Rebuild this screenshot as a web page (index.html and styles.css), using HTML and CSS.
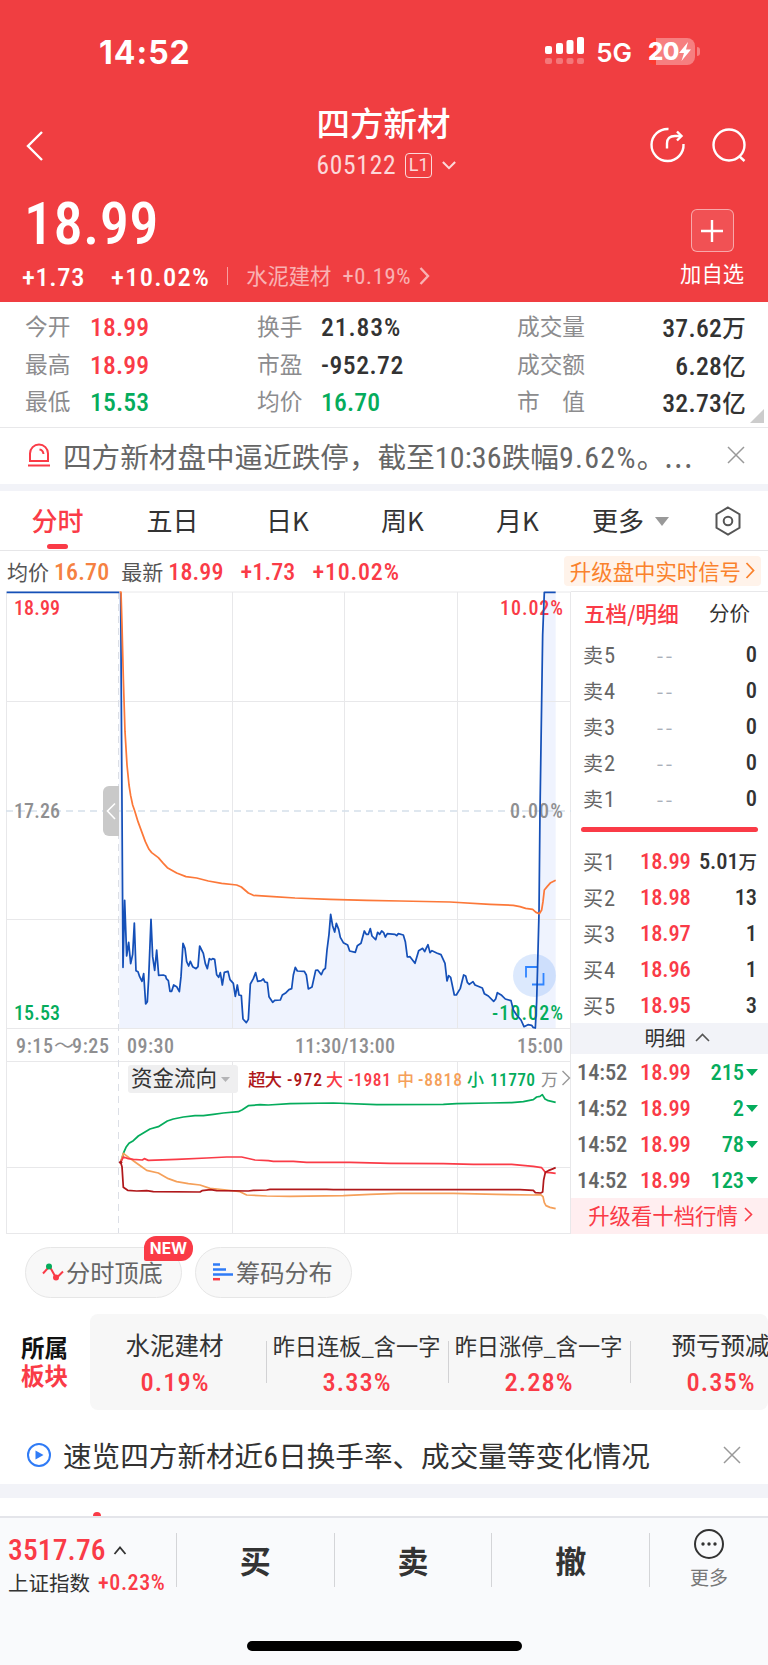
FILE: index.html
```html
<!DOCTYPE html>
<html lang="zh-CN">
<head>
  <meta charset="utf-8">
  <title>四方新材 605122</title>
  <link rel="stylesheet" href="styles.css">
</head>
<body>
<div class="page">
  <!-- Header -->
  <header class="header">
    <div class="statusbar">
      <span class="clock">14:52</span>
      <div class="status-right">
        <svg class="signal" width="40" height="28" viewBox="0 0 40 28" fill="#fff">
          <rect x="0" y="9" width="7" height="8" rx="2"/><rect x="11" y="6" width="7" height="11" rx="2"/>
          <rect x="21.5" y="3" width="7" height="14" rx="2"/><rect x="32" y="0" width="7" height="17" rx="2"/>
          <g opacity=".3"><rect x="0" y="21" width="7" height="6" rx="2"/><rect x="11" y="21" width="7" height="6" rx="2"/><rect x="21.5" y="21" width="7" height="6" rx="2"/><rect x="32" y="21" width="7" height="6" rx="2"/></g>
        </svg>
        <span class="net">5G</span>
        <span class="battery"><b>20</b><svg width="12" height="19" viewBox="0 0 12 19" fill="#fff"><path d="M9 0L0 11h5L2.500 19L12 7.500H7z"/></svg></span><i class="nub"></i>
      </div>
    </div>
    <div class="titlebar">
      <svg class="back" width="18" height="32" viewBox="0 0 18 32"><path d="M16 2L2 16L16 30"/></svg>
      <div class="title">
        <h1>四方新材</h1>
        <div class="code"><span class="num">605122</span><span class="level">L1</span><svg width="14" height="9" viewBox="0 0 16 10"><path d="M1 1l7 7l7-7"/></svg></div>
      </div>
      <div class="actions">
        <svg width="36" height="36" viewBox="0 0 36 36"><path d="M18.500 2A16 16 0 1 0 33.500 17"/><path d="M17 21.500v-5Q17 9 25 9H31"/><path d="M27 4.500L31.500 9L27 13.500"/></svg>
        <svg width="36" height="36" viewBox="0 0 36 36"><circle cx="18" cy="18" r="15.500"/><path d="M28 29l5.500 5"/></svg>
      </div>
    </div>
    <div class="quote">
      <div>
        <div class="price num">18.99</div>
        <div class="change"><span class="num c1">+1.73</span><span class="num c2">+10.02%</span><i></i><span class="ind">水泥建材</span><span class="num c3">+0.19%</span><svg width="11" height="18" viewBox="0 0 11 18"><path d="M1.500 1L9 9L1.500 17"/></svg></div>
      </div>
      <div class="add">
        <span class="plus"><svg width="22" height="22" viewBox="0 0 22 22"><path d="M11 0v22M0 11h22"/></svg></span>
        <span>加自选</span>
      </div>
    </div>
  </header>

  <!-- Key figures -->
  <section class="stats">
    <span class="k">今开</span><span class="v num up">18.99</span><span class="k">换手</span><span class="v num pct">21.83%</span><span class="k">成交量</span><span class="v num r">37.62<em>万</em></span>
    <span class="k">最高</span><span class="v num up">18.99</span><span class="k">市盈</span><span class="v num pe">-952.72</span><span class="k">成交额</span><span class="v num r">6.28<em>亿</em></span>
    <span class="k">最低</span><span class="v num down">15.53</span><span class="k">均价</span><span class="v num down">16.70</span><span class="k wide"><b>市</b><b>值</b></span><span class="v num r">32.73<em>亿</em></span>
    <span class="corner"></span>
  </section>

  <div class="notice">
    <svg class="alarm" width="24" height="24" viewBox="0 0 24 24"><path d="M3 18V10.500a9 9 0 0 1 18 0V18zM1 22.500h22M12.500 6.500q3.500.5 4 4.500"/></svg>
    <p>四方新材盘中逼近跌停，截至<span class="num">10:36</span>跌幅<span class="num pct">9.62%</span>。<span class="dots">...</span></p>
    <svg class="close" width="18" height="18" viewBox="0 0 18 18"><path d="M1 1l16 16M17 1L1 17"/></svg>
  </div>

  <nav class="tabs">
    <span class="on">分时</span><span>五日</span><span>日K</span><span>周K</span><span>月K</span><span class="more">更多<i></i></span>
    <svg width="28" height="30" viewBox="0 0 28 30"><path d="M14 1.500L25.500 8.200V21.800L14 28.500L2.500 21.800V8.200z"/><circle cx="14" cy="15" r="4.300"/></svg>
  </nav>

  <div class="latest">
    <span>均价</span><span class="num avg">16.70</span><span class="lb">最新</span><span class="num up">18.99</span><span class="num up d1">+1.73</span><span class="num up d2">+10.02%</span>
    <span class="signal-link">升级盘中实时信号<svg width="10" height="17" viewBox="0 0 10 17"><path d="M1.500 1L8.500 8.500L1.500 16"/></svg></span>
  </div>

  <!-- Chart and order book -->
  <main class="board">
    <svg class="chart" width="571" height="643" viewBox="0 0 571 643">
      <!-- price area, drawn in thirds of a pixel -->
      <g transform="translate(0 -6) scale(.33333)">
        <path class="area" d="M358 1330V21L362 21 369 1147 374 946 380 1113 386 1072 392 1136 398 1108 403 1014 408 1157 414 1160 419 1175 426 1189 431 1166 437 1257 442 1250 446 1180 453 1003 458 1115 464 1156 470 1095 476 1171 490 1170 505 1187 510 1219 515 1219 521 1200 530 1205 538 1220 543 1175 549 1075 555 1090 560 1130 566 1143 571 1129 578 1145 588 1151 594 1145 599 1083 610 1105 616 1136 622 1151 628 1121 644 1123 650 1169 656 1177 661 1163 667 1200 673 1162 684 1159 690 1184 700 1195 706 1234 712 1200 717 1230 724 1232 729 1302 739 1313 745 1303 751 1197 760 1181 767 1163 773 1189 790 1182 802 1193 807 1235 818 1252 824 1246 841 1245 847 1230 875 1211 880 1170 886 1147 892 1158 913 1159 919 1170 925 1212 936 1206 947 1156 953 1155 964 1169 976 1150 981 1095 987 1048 992 988 998 1023 1004 1041 1009 1015 1021 1057 1030 1073 1043 1080 1049 1098 1066 1102 1072 1082 1083 1075 1093 1038 1105 1048 1111 1031 1116 1053 1127 1064 1133 1042 1145 1038 1156 1056 1162 1046 1195 1046 1210 1050 1216 1070 1222 1116 1230 1115 1245 1135 1256 1097 1268 1090 1284 1079 1290 1103 1323 1109 1335 1135 1341 1188 1346 1172 1352 1177 1363 1230 1381 1210 1391 1170 1402 1192 1419 1190 1447 1209 1481 1249 1492 1223 1516 1242 1533 1247 1550 1290 1572 1325 1606 1329 1610 1250 1617 985 1628 150 1633 22H1667V1330z"/>
      </g>
      <g class="grid">
        <path d="M6.500 1V642.500M232.500 1V437.500M232.500 471V642.500M344.500 1V437.500M344.500 471V642.500M457.500 1V437.500M457.500 471V642.500M570.500 1V642.500"/>
        <path d="M6 1H571M6 110.500H571M6 328.500H571M6 437.500H571M6 470.500H571M6 576.500H571M6 642.500H571"/>
        <path class="dash" d="M118.500 1V642"/>
        <path class="dash mid" d="M6 220H571"/>
      </g>
      <g class="labels">
        <text x="14" y="24" class="up" textLength="46">18.99</text>
        <text x="14" y="227" textLength="46">17.26</text>
        <text x="14" y="429" class="down" textLength="46">15.53</text>
        <text x="500" y="24" class="up" textLength="63">10.02%</text>
        <text x="510" y="227" textLength="53">0.00%</text>
        <text x="492" y="429" class="down" textLength="71">-10.02%</text>
        <text x="16" y="462" textLength="37">9:15</text><text x="54" y="462" font-size="16">～</text><text x="72" y="462" textLength="37">9:25</text>
        <text x="127" y="462" textLength="47">09:30</text>
        <text x="295" y="462" textLength="100">11:30/13:00</text>
        <text x="517" y="462" textLength="46">15:00</text>
      </g>
      <path class="handle" d="M119 195H109a6 6 0 0 0-6 6v38a6 6 0 0 0 6 6H119z"/>
      <path class="handle-arrow" d="M115 212.500l-7.500 7.500l7.500 8"/>
      <circle class="expand-bg" cx="534.500" cy="384.500" r="21.500"/>
      <path class="expand" d="M526 386.500V376H537M543.500 382V393.500H532"/>
      <g class="lines" transform="translate(0 -6) scale(.33333)">
        <path class="price-line" d="M20 22H358M362 24L369 1147 374 946 380 1113 386 1072 392 1136 398 1108 403 1014 408 1157 414 1160 419 1175 426 1189 431 1166 437 1257 442 1250 446 1180 453 1003 458 1115 464 1156 470 1095 476 1171 490 1170 497 1173 499 1181 505 1187 510 1219 515 1219 521 1200 530 1205 538 1220 543 1175 549 1075 555 1090 560 1130 566 1143 571 1129 578 1145 588 1151 594 1145 599 1083 610 1105 616 1136 622 1151 628 1121 634 1124 638 1121 644 1123 650 1169 656 1177 661 1163 667 1200 673 1162 684 1159 690 1184 700 1195 706 1234 712 1200 717 1230 724 1232 729 1302 739 1313 745 1303 751 1197 760 1181 767 1163 773 1189 784 1187 790 1182 795 1191 802 1193 807 1235 818 1252 824 1246 841 1245 847 1230 858 1223 867 1214 875 1211 880 1170 886 1147 892 1158 913 1159 919 1170 925 1212 936 1206 947 1156 953 1155 964 1169 970 1155 976 1150 981 1095 987 1048 992 988 998 1023 1004 1041 1009 1015 1016 1033 1021 1057 1030 1073 1043 1080 1049 1098 1066 1102 1072 1082 1083 1075 1093 1038 1099 1048 1105 1048 1111 1031 1116 1053 1127 1064 1133 1042 1139 1048 1145 1038 1151 1043 1156 1056 1162 1046 1185 1048 1190 1052 1195 1046 1210 1050 1216 1070 1222 1116 1230 1115 1245 1135 1256 1097 1268 1090 1274 1100 1284 1079 1290 1103 1296 1097 1310 1104 1323 1109 1335 1135 1341 1188 1346 1172 1352 1177 1363 1230 1369 1230 1381 1210 1391 1170 1397 1173 1402 1192 1408 1198 1419 1190 1425 1200 1447 1209 1453 1226 1465 1233 1481 1249 1487 1242 1492 1223 1505 1231 1516 1242 1533 1247 1540 1275 1550 1290 1563 1305 1572 1325 1584 1319 1595 1321 1599 1327 1606 1329 1610 1250 1617 985 1620 680 1628 150 1633 22H1667"/>
        <path class="avg-line" d="M359 21L363 21 366 120 370 280 375 440 381 540 387 600 392 632 398 660 404 677 414 710 425 740 436 770 447 793 455 803 475 818 490 835 502 848 530 864 558 875 590 879 625 888 665 895 710 900 724 906 745 924 760 931 820 935 885 939 990 943 1100 946 1200 948 1350 951 1470 958 1540 961 1560 965 1577 970 1598 973 1608 982 1618 986 1625 975 1629 950 1633 915 1642 904 1652 893 1667 886"/>
      </g>
      <g class="lines flow" transform="translate(0 439) scale(.33333)">
        <path stroke="#05ac5c" d="M362 397L371 368 378 352 387 340 400 332 415 318 430 309 450 297 475 290 502 273 520 267 550 261 585 257 610 257 640 253 670 249 715 245 727 239 745 227 780 224 805 225 870 221 1000 219 1130 224 1330 223 1370 221 1470 219 1535 218 1570 215 1600 209 1610 201 1620 199 1627 194 1635 207 1645 212 1667 217"/>
        <path stroke="#f5a05a" d="M362 397L370 370 390 385 405 396 425 410 440 421 475 429 505 446 530 455 565 461 600 465 630 475 680 480 720 485 740 495 800 498 870 499 1030 497 1110 493 1195 490 1360 490 1490 493 1600 495 1622 494 1629 500 1633 518 1638 527 1650 532 1667 536"/>
        <path stroke="#fa3b47" d="M362 397L370 381 385 386 400 388 427 390 433 386 445 391 530 388 620 384 680 381 725 381 765 390 805 392 820 394 880 394 920 397 1050 397 1170 400 1330 401 1420 403 1535 403 1600 409 1625 413 1636 427 1650 428 1667 430"/>
        <path stroke="#b0181b" d="M362 397L366 410 370 472 383 481 410 483 440 482 460 485 600 486 606 482 632 479 650 482 745 483 760 481 800 480 810 478 980 478 1000 479 1560 479 1600 481 1606 488 1622 489 1628 486 1631 450 1636 427 1645 422 1660 416 1667 413"/>
        <circle cx="362" cy="397" r="5" fill="#b0181b"/>
      </g>
      <rect x="128" y="474" width="110" height="28" rx="3" fill="#efeff0"/>
      <text x="131" y="495" class="flow-name" textLength="86">资金流向</text>
      <path d="M221 486h9l-4.500 5z" fill="#b4b4b6"/>
      <g class="legend">
        <text x="248" y="495" fill="#b0181b" textLength="34">超大</text><text x="287" y="495" fill="#b0181b" textLength="35">-972</text>
        <text x="326" y="495" fill="#fa3b47">大</text><text x="348" y="495" fill="#fa3b47" textLength="43">-1981</text>
        <text x="397" y="495" fill="#f5a05a">中</text><text x="418" y="495" fill="#f5a05a" textLength="44">-8818</text>
        <text x="467" y="495" fill="#05ac5c">小</text><text x="490" y="495" fill="#05ac5c" textLength="45">11770</text>
        <text x="541" y="495" fill="#8d8d8f" class="unit">万</text>
      </g>
      <path class="legend-arrow" d="M562.500 480l7 7l-7 7"/>
    </svg>

    <aside class="book">
      <div class="book-tabs"><b>五档/明细</b><span>分价</span></div>
      <ul class="levels">
        <li><span>卖<i class="num">5</i></span><span class="none">--</span><span class="num vol">0</span></li>
        <li><span>卖<i class="num">4</i></span><span class="none">--</span><span class="num vol">0</span></li>
        <li><span>卖<i class="num">3</i></span><span class="none">--</span><span class="num vol">0</span></li>
        <li><span>卖<i class="num">2</i></span><span class="none">--</span><span class="num vol">0</span></li>
        <li><span>卖<i class="num">1</i></span><span class="none">--</span><span class="num vol">0</span></li>
      </ul>
      <div class="ratio"></div>
      <ul class="levels">
        <li><span>买<i class="num">1</i></span><span class="num up">18.99</span><span class="num vol">5.01<em>万</em></span></li>
        <li><span>买<i class="num">2</i></span><span class="num up">18.98</span><span class="num vol">13</span></li>
        <li><span>买<i class="num">3</i></span><span class="num up">18.97</span><span class="num vol">1</span></li>
        <li><span>买<i class="num">4</i></span><span class="num up">18.96</span><span class="num vol">1</span></li>
        <li><span>买<i class="num">5</i></span><span class="num up">18.95</span><span class="num vol">3</span></li>
      </ul>
      <div class="detail-head">明细<svg width="15" height="9" viewBox="0 0 15 9"><path d="M1 8l6.500-6.500L14 8"/></svg></div>
      <ul class="ticks">
        <li><span class="num">14:52</span><span class="num up">18.99</span><span class="num down">215<i></i></span></li>
        <li><span class="num">14:52</span><span class="num up">18.99</span><span class="num down">2<i></i></span></li>
        <li><span class="num">14:52</span><span class="num up">18.99</span><span class="num down">78<i></i></span></li>
        <li><span class="num">14:52</span><span class="num up">18.99</span><span class="num down">123<i></i></span></li>
      </ul>
      <div class="upgrade">升级看十档行情<svg width="9" height="15" viewBox="0 0 9 15"><path d="M1 1l6.500 6.500L1 14"/></svg></div>
    </aside>
  </main>

  <div class="tools">
    <span class="pill"><svg width="22" height="18" viewBox="0 0 22 18"><path d="M1 10.500L6 5M8.500 5L13 13M16 13.500l5-5" stroke="#fa3b47" stroke-width="2" fill="none"/><circle cx="7" cy="3.500" r="3" fill="#05ac5c"/><circle cx="14" cy="14.500" r="3" fill="#fa3b47"/></svg>分时顶底<em>NEW</em></span>
    <span class="pill"><svg width="22" height="18" viewBox="0 0 22 18"><path d="M1 1.500h7M1 6.500h13M1 11.500h20" stroke="#2f7bf6" stroke-width="2.500"/><path d="M1 16.200h7" stroke="#fa3b47" stroke-width="2.500"/></svg>筹码分布</span>
  </div>

  <section class="sectors">
    <div class="sectors-title"><b>所属</b><b class="up">板块</b></div>
    <div class="sector-list">
      <div class="sector big"><span>水泥建材</span><span class="num up">0.19%</span></div>
      <div class="sector"><span>昨日连板_含一字</span><span class="num up">3.33%</span></div>
      <div class="sector"><span>昨日涨停_含一字</span><span class="num up">2.28%</span></div>
      <div class="sector big"><span>预亏预减</span><span class="num up">0.35%</span></div>
    </div>
  </section>

  <div class="notice video">
    <svg class="play" width="26" height="26" viewBox="0 0 26 26"><circle cx="13" cy="13" r="11" fill="none" stroke="#2f7bf6" stroke-width="2"/><path d="M9.500 8.500v9l8-4.500z" fill="#2f7bf6"/></svg>
    <p>速览四方新材近<span class="num">6</span>日换手率、成交量等变化情况</p>
    <svg class="close" width="18" height="18" viewBox="0 0 18 18"><path d="M1 1l16 16M17 1L1 17"/></svg>
  </div>
  <div class="peek"><i></i></div>

  <!-- Bottom bar -->
  <footer class="footer">
    <div class="bar">
      <div class="index">
        <div class="num index-value">3517.76<svg width="14" height="9" viewBox="0 0 14 9"><path d="M1.500 8L7 1.500L12.500 8"/></svg></div>
        <div class="index-name">上证指数<span class="num up">+0.23%</span></div>
      </div>
      <b>买</b><b>卖</b><b>撤</b>
      <div class="bar-more">
        <svg width="32" height="32" viewBox="0 0 32 32"><circle cx="16" cy="16" r="14" fill="none" stroke="#333" stroke-width="2"/><circle cx="10" cy="16" r="1.700"/><circle cx="16" cy="16" r="1.700"/><circle cx="22" cy="16" r="1.700"/></svg>
        <span>更多</span>
      </div>
    </div>
    <div class="home"></div>
  </footer>
</div>
</body>
</html>
```
FILE: styles.css
```css
* {
  box-sizing: border-box;
}
body {
  margin: 0;
  font-family: "Noto Sans CJK SC", sans-serif;
  color: #333;
  background: #fff;
}
h1, p, ul {
  margin: 0;
  padding: 0;
}
i, em {
  font-style: normal;
}
svg {
  display: block;
  flex: none;
}
.page {
  width: 768px;
  height: 1665px;
  overflow: hidden;
  display: flex;
  flex-direction: column;
}
.page > * {
  flex: none;
}
.num {
  font-family: Roboto, "Noto Sans CJK SC", sans-serif;
  font-stretch: 87%;
  font-weight: 500;
  letter-spacing: 0.005em;
}
.up {
  color: #fa3b47;
  fill: #fa3b47;
}
.down {
  color: #05ac5c;
  fill: #05ac5c;
}

/* header */
.header {
  height: 302px;
  background: #f03e41;
  color: #fff;
  white-space: nowrap;
}
.header svg {
  stroke: #fff;
  fill: none;
  stroke-width: 2.4;
}
.statusbar {
  display: flex;
  justify-content: space-between;
  height: 90px;
  padding: 34px 68px 0 99px;
}
.clock {
  font: 700 32px/38px Inter, sans-serif;
  letter-spacing: 1px;
}
.status-right {
  display: flex;
  height: 34px;
  align-items: center;
}
.header .signal, .header .battery svg {
  stroke: none;
  fill: #fff;
}
.net {
  font: 600 26px/34px Inter, sans-serif;
  margin: 3px 16px 0 11px;
}
.battery {
  display: flex;
  align-items: center;
  width: 47px;
  height: 27px;
  border-radius: 8px;
  background: linear-gradient(90deg, #fc3a30 8px, #f67f80 8px);
}
.battery b {
  font: 800 24px/27px Inter, sans-serif;
  letter-spacing: -0.5px;
}
.nub {
  width: 3px;
  height: 9px;
  margin-left: 2px;
  border-radius: 0 4px 4px 0;
  background: #f67f80;
}
.titlebar {
  display: flex;
  justify-content: space-between;
  height: 101px;
  padding: 0 21px 0 26px;
}
.back {
  margin-top: 40px;
}
.title {
  width: 150px;
  margin-left: 89px;
}
h1 {
  font-size: 33.5px;
  font-weight: 500;
  line-height: 40px;
  margin-top: 12px;
}
.code {
  display: flex;
  align-items: center;
  height: 26px;
  margin-top: 10px;
  opacity: 0.8;
}
.code .num {
  font-size: 25.5px;
  font-weight: 400;
  letter-spacing: 0.7px;
}
.level {
  margin: 0 10px 0 9px;
  width: 27px;
  height: 25px;
  border: 1.5px solid #fff;
  border-radius: 4px;
  text-align: center;
  font: 18px/22px Roboto, sans-serif;
}
.actions {
  display: flex;
  gap: 25px;
  padding-top: 37px;
}
.quote {
  display: flex;
  justify-content: space-between;
  padding: 0 24px 0 24px;
}
.price {
  font-size: 58.5px;
  line-height: 66px;
}
.change {
  display: flex;
  align-items: center;
  height: 30px;
  margin-top: 4px;
  margin-left: -2px;
  font-size: 26.5px;
}
.change .num {
  margin-top: 1px;
}
.change .c1 {
  letter-spacing: 0.6px;
}
.change .c2 {
  margin-left: 26px;
  letter-spacing: 1.3px;
}
.change i {
  width: 1px;
  height: 18px;
  margin: 0 18px 0 17px;
  background: rgba(255, 255, 255, 0.5);
}
.ind, .c3, .change svg {
  opacity: 0.6;
}
.ind {
  font-size: 21.3px;
  margin-top: -3px;
}
.change .c3 {
  font-size: 22.5px;
  font-weight: 400;
  letter-spacing: 0.7px;
  margin: 0 8px 0 11px;
}
.add {
  display: flex;
  flex-direction: column;
  align-items: center;
  font-size: 21.3px;
  line-height: 26px;
}
.plus {
  display: flex;
  align-items: center;
  justify-content: center;
  width: 43px;
  height: 43px;
  margin: 18px 0 8px;
  border: 1.5px solid rgba(255, 255, 255, 0.5);
  border-radius: 6px;
  background: rgba(255, 255, 255, 0.1);
}

/* figures */
.stats {
  position: relative;
  display: grid;
  grid-template-columns: 65px 167px 64px 196px 90px 138px;
  grid-auto-rows: 37.5px;
  align-items: center;
  height: 126px;
  padding: 6px 0 0 25px;
  border-bottom: 1px solid #e8e8ea;
}
.k {
  font-size: 22.7px;
  margin-top: -2px;
  color: #8c8c8e;
}
.wide {
  display: flex;
  justify-content: space-between;
  width: 68px;
}
.wide b {
  font-weight: 400;
}
.v {
  font-size: 25.7px;
  margin-top: 1px;
}
.v.pct {
  letter-spacing: 0.9px;
}
.v.pe {
  letter-spacing: 0.5px;
}
.v em {
  font-size: 23.5px;
}
.r {
  width: 163px;
  justify-self: end;
  text-align: right;
}
.v.r {
  margin-right: -1px;
  letter-spacing: 0.3px;
}
.corner {
  position: absolute;
  right: 4px;
  bottom: 4px;
  border-left: 14px solid transparent;
  border-bottom: 14px solid #ccc;
}
.notice {
  display: flex;
  align-items: center;
  height: 63px;
  padding: 0 23px 2px 27px;
  border-bottom: 7px solid #f2f3f8;
  font-size: 28.6px;
  white-space: nowrap;
  color: #666;
}
.notice p {
  flex: 1;
  margin-left: 12px;
}
.notice .num {
  font-weight: 400;
  font-size: 30px;
}
.notice .pct {
  letter-spacing: 1.3px;
}
.dots {
  letter-spacing: 2px;
  margin-left: -1px;
}
.alarm {
  fill: none;
  stroke: #fa3b47;
  stroke-width: 2;
}
.close {
  stroke: #999;
  stroke-width: 1.5;
}

/* tabs */
.tabs {
  display: flex;
  align-items: center;
  height: 60px;
  padding-left: 0;
  border-bottom: 1px solid #e6e6e8;
  font-size: 26px;
}
.tabs span {
  width: 115px;
  text-align: center;
  margin-top: -2px;
}
.tabs .on {
  position: relative;
  color: #fa3b47;
  font-weight: 500;
}
.tabs .on::after {
  content: "";
  position: absolute;
  left: 47px;
  bottom: -11px;
  width: 21px;
  height: 5px;
  border-radius: 3px;
  background: #fa3b47;
}
.tabs .more {
  display: flex;
  align-items: center;
  width: 139px;
  padding-left: 17px;
}
.more i {
  margin: 3px 0 0 11px;
  border: 7px solid transparent;
  border-top: 9px solid #999;
  border-bottom: 0;
}
.tabs svg {
  fill: none;
  stroke: #555;
  stroke-width: 2;
}
.latest {
  display: flex;
  align-items: center;
  height: 40px;
  padding: 0 7px 0 7px;
  font-size: 21px;
  color: #555;
}
.latest span {
  margin-top: -1px;
}
.latest .num {
  font-size: 24px;
  margin: 2px 0 0 5px;
}
.latest .avg {
  color: #f58142;
}
.latest .lb {
  margin-left: 12px;
}
.latest .d1, .latest .d2 {
  margin-left: 17px;
}
.latest .d2 {
  letter-spacing: 0.8px;
}
.latest .signal-link {
  display: flex;
  align-items: center;
  gap: 4px;
  height: 30px;
  margin: 0 0 0 auto;
  padding: 0 6px 1px;
  border-radius: 4px;
  background: #fff3ea;
  color: #fa822d;
  font-size: 21.4px;
}
.signal-link svg {
  fill: none;
  stroke: #fa822d;
  stroke-width: 1.8;
}

/* chart */
.board {
  display: flex;
  height: 643px;
}
.area {
  fill: #eff3fe;
}
.grid path {
  fill: none;
  stroke: #e8e8ea;
}
.grid .dash {
  stroke: #dcdfe6;
  stroke-dasharray: 7 5;
}
.grid .mid {
  stroke: #d5e0ea;
  stroke-width: 1.6;
}
.labels text {
  font-family: Roboto, sans-serif;
  font-size: 20px;
  font-stretch: 87%;
  font-weight: 500;
}
.labels text:not(.up):not(.down) {
  fill: #8f8f91;
}
.handle {
  fill: #c9c9c9;
}
.handle-arrow {
  fill: none;
  stroke: #fff;
  stroke-width: 1.6;
}
.expand-bg {
  fill: #2f7bf6;
  opacity: 0.17;
}
.expand {
  fill: none;
  stroke: #2f84ff;
  stroke-width: 1.8;
}
.lines path {
  fill: none;
  stroke-width: 5.2;
  stroke-linejoin: round;
}
.lines .price-line {
  stroke: #1550b8;
}
.lines .avg-line {
  stroke: #fc7839;
}
.flow-name {
  font-size: 21.5px;
  fill: #333;
}
.legend text {
  font-family: Roboto, "Noto Sans CJK SC", sans-serif;
  font-size: 17px;
  font-weight: 500;
}
.legend text[textLength] {
  font-stretch: 87%;
  font-size: 17.5px;
}
.legend .unit {
  font-weight: 400;
}
.legend-arrow {
  fill: none;
  stroke: #999;
  stroke-width: 1.4;
}

/* order book */
.book {
  width: 197px;
  border-top: 1px solid #e8e8ea;
  font-size: 20px;
}
.book-tabs {
  display: flex;
  align-items: center;
  justify-content: space-between;
  height: 44px;
  padding: 0 18px 4px 13px;
  font-size: 20.5px;
}
.book-tabs b {
  color: #fa3b47;
  font-weight: 500;
  font-size: 21.6px;
}
.levels, .ticks {
  list-style: none;
}
.levels li {
  display: grid;
  grid-template-columns: 57px 51px 1fr;
  align-items: center;
  height: 36px;
  padding: 0 11px 0 12px;
  white-space: nowrap;
  color: #666;
}
.levels .num, .ticks .num {
  font-size: 22.5px;
  letter-spacing: -0.1px;
}
.levels i.num {
  font-weight: 400;
  margin-left: 1px;
}
.vol em {
  font-size: 18.5px;
}
.none {
  text-align: center;
  letter-spacing: 2px;
  color: #aab0ba;
}
.vol {
  text-align: right;
  color: #333;
}
.ratio {
  height: 5px;
  margin: 11px 10px 11px;
  border-radius: 3px;
  background: #fa3b47;
}
.detail-head {
  display: flex;
  align-items: center;
  justify-content: center;
  gap: 9px;
  height: 31px;
  padding: 0 0 3px 15px;
  background: #f2f3f8;
  font-size: 20.5px;
}
.detail-head svg, .upgrade svg {
  fill: none;
  stroke: #555;
  stroke-width: 1.6;
}
.ticks li {
  display: grid;
  grid-template-columns: 63px 55px 1fr;
  align-items: center;
  height: 36px;
  padding: 0 10px 0 6px;
  color: #666;
}
.ticks .down {
  display: flex;
  align-items: center;
  justify-content: flex-end;
  gap: 2px;
}
.ticks i {
  border: 6.5px solid transparent;
  border-top: 7px solid #05ac5c;
  border-bottom: 0;
}
.upgrade {
  display: flex;
  align-items: center;
  justify-content: center;
  gap: 6px;
  height: 36px;
  padding: 0 0 4px 2px;
  background: #ffeef0;
  color: #fa3b47;
  font-size: 21.4px;
}
.upgrade svg {
  stroke: #fa3b47;
}

/* tools */
.tools {
  display: flex;
  gap: 13px;
  height: 80px;
  padding: 13px 25px 0;
}
.pill {
  position: relative;
  display: flex;
  align-items: center;
  gap: 2px;
  width: 157px;
  height: 51px;
  padding: 0 0 2px 16px;
  border: 1px solid #e6e6e6;
  border-radius: 26px;
  background: #f8f8f8;
  font-size: 24.2px;
  color: #666;
  white-space: nowrap;
}
.pill em {
  position: absolute;
  left: 118px;
  top: -12px;
  width: 49px;
  height: 25px;
  border-radius: 12px 12px 12px 2px;
  background: #fa3b47;
  color: #fff;
  font: 700 15.5px/26px Inter, sans-serif;
  text-align: center;
}

/* sectors */
.sectors {
  display: flex;
  height: 96px;
}
.sectors-title {
  display: flex;
  flex-direction: column;
  width: 90px;
  padding: 19px 0 0 21px;
  color: #111;
  font-size: 23.5px;
  line-height: 28px;
}
.sector-list {
  display: flex;
  width: 678px;
  border-radius: 8px;
  background: #f7f7f7;
  overflow: hidden;
}
.sector {
  flex: none;
  display: flex;
  flex-direction: column;
  align-items: center;
  width: 182px;
  font-size: 22.2px;
  white-space: nowrap;
  padding: 14px 1px 0 0;
  line-height: 34px;
  background: linear-gradient(#d2d2d4, #d2d2d4) 0 27px / 1px 42px no-repeat;
}
.sector:first-child {
  width: 176px;
  padding-right: 7px;
  background: none;
}
.sector.big {
  font-size: 24.5px;
}
.sector .num {
  font-size: 26.5px;
  line-height: 40px;
  letter-spacing: 1px;
  margin-left: 1px;
}
.notice.video {
  height: 88px;
  padding: 15px 27px 0 26px;
  border-bottom: 14px solid #f2f3f8;
  color: #333;
}
.video p {
  margin-left: 11px;
}
.peek {
  display: flex;
  align-items: flex-end;
  height: 18px;
  padding-left: 93px;
}
.peek i {
  width: 8px;
  height: 4px;
  border-radius: 4px 4px 0 0;
  background: #fa3b47;
}

/* footer */
.footer {
  height: 149px;
  border-top: 2px solid #e4e5ea;
  background: #f9fafc;
}
.bar {
  display: flex;
  height: 123px;
  padding-top: 15px;
}
.index {
  width: 176px;
  padding-left: 8px;
  margin-top: -1px;
  white-space: nowrap;
}
.index-value {
  display: flex;
  align-items: center;
  gap: 7px;
  font-size: 29.5px;
  line-height: 36px;
  color: #fa3b47;
}
.index-value svg {
  fill: none;
  stroke: #333;
  stroke-width: 1.8;
}
.index-name {
  display: flex;
  align-items: center;
  gap: 8px;
  font-size: 20.5px;
  line-height: 29px;
}
.index-name .num {
  font-size: 22px;
  letter-spacing: 0.6px;
}
.bar > b {
  width: 157.7px;
  height: 54px;
  border-left: 1px solid #d4d5d8;
  text-align: center;
  font-size: 31px;
  line-height: 53px;
}
.bar-more {
  display: flex;
  flex-direction: column;
  align-items: center;
  width: 119px;
  height: 54px;
  border-left: 1px solid #d4d5d8;
  font-size: 19px;
  line-height: 24px;
  color: #777;
}
.bar-more svg {
  margin: -5px 0 5px;
  fill: #333;
}
.home {
  width: 275px;
  height: 10px;
  margin: 0 auto;
  border-radius: 5px;
  background: #000;
}
```
